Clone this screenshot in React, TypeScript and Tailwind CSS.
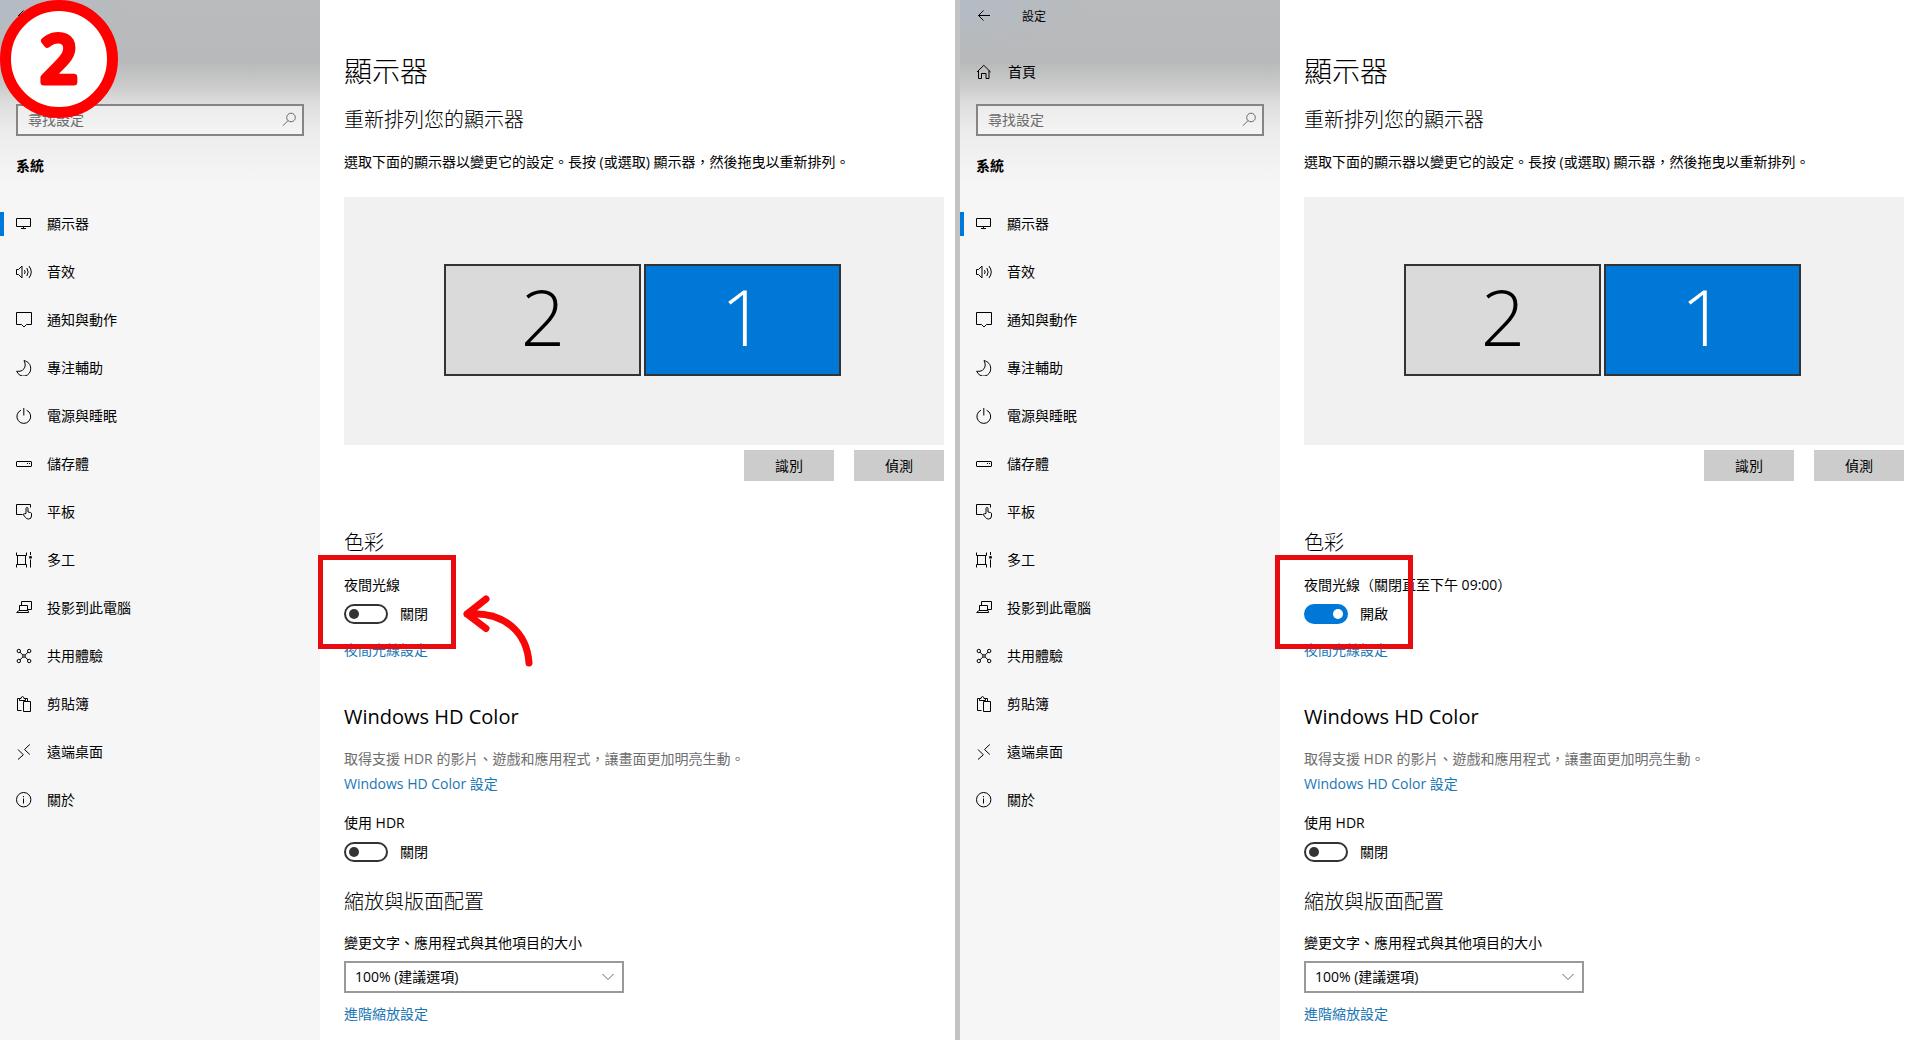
import { useState } from 'react';
import type { ReactNode } from 'react';

type NavItem = {
  label: string;
  icon: ReactNode;
};

const navItems: NavItem[] = [
  {
    label: '顯示器',
    icon: <path d="M.5 2.5h14v8h-14zM7.5 10.5v2M5 12.5h5" />,
  },
  {
    label: '音效',
    icon: (
      <path d="M.5 5.500v5h2l3.500 3.500v-12L2.500 5.500zM8.500 6q1.300 2 0 4M10.800 4q2.700 4 0 8M13 2q4.500 6 0 12" />
    ),
  },
  {
    label: '通知與動作',
    icon: <path d="M.5.5h15v12h-5L8 15l-2.500-2.500h-5z" />,
  },
  {
    label: '專注輔助',
    icon: <path d="M8 .6C12.200 1.500 14.700 4.600 14.700 8.300a7.200 7.200 0 0 1-14 2.900C6.800 12.500 11.500 7 8 .6z" />,
  },
  {
    label: '電源與睡眠',
    icon: <path d="M5 2.200a6.900 6.900 0 1 0 5.600 0M7.800 0v7.500" />,
  },
  {
    label: '儲存體',
    icon: (
      <>
        <rect x=".5" y="5.500" width="15" height="5" rx=".5" />
        <path d="M11 7.500h1M13 7.500h1" />
      </>
    ),
  },
  {
    label: '平板',
    icon: (
      <path d="M14.500 3.500v-3H.5v10h6M10 9.500V4.600q0-1.100 1-1.100t1 1.100v3.400l2.500.5q1 .3 1 1.300v2.200q0 3-3 3-2 0-3-1.500L7.300 10.800q0-1.500 1.500-1z" />
    ),
  },
  {
    label: '多工',
    icon: (
      <>
        <path d="M.5.5v3h10v-3M.5 15.500v-3h10v3M1.500 3.500v9M9.500 3.500v9M14.500 0v3M14.500 7.500v8" />
        <path d="M13.200 5.300h2.600" strokeWidth="2.400" />
      </>
    ),
  },
  {
    label: '投影到此電腦',
    icon: <path d="M5.500 5.500v-4h10v8h-4M3.500 11V5.500h8V11M3 10.500h9l.6 2H.6l2.400-2z" />,
  },
  {
    label: '共用體驗',
    icon: (
      <>
        <circle cx="2.800" cy="3" r="1.700" />
        <circle cx="13.200" cy="3" r="1.700" />
        <circle cx="2.800" cy="13" r="1.700" />
        <circle cx="13.200" cy="13" r="1.700" />
        <circle cx="8" cy="8" r="1.300" />
        <path d="M4 4.200l3 2.900M12 4.200L9 7.100M4 11.800l3-2.900M12 11.800L9 8.900" />
      </>
    ),
  },
  {
    label: '剪貼簿',
    icon: <path d="M5.500 14.500h-4v-12h2M9.500 2.500h2v3M3.500 4.500v-2H5q.2-2 1.500-2t1.500 2h1.500v2zM7.500 5.500h7v10h-7z" />,
  },
  {
    label: '遠端桌面',
    icon: <path d="M2 5.500l5.300 5.300L2 15.500M13.800.5L8.500 5.500l5.300 5" />,
  },
  {
    label: '關於',
    icon: (
      <>
        <circle cx="7.700" cy="7.700" r="7.200" />
        <path d="M7.500 6.500v5M7.500 4v1.200" />
      </>
    ),
  },
];

function Icon({ children, className = '' }: { children: ReactNode; className?: string }) {
  return (
    <svg
      viewBox="0 0 16 16"
      aria-hidden="true"
      className={`size-4 shrink-0 fill-none stroke-current ${className}`}
    >
      {children}
    </svg>
  );
}

function Sidebar({ titled }: { titled: boolean }) {
  return (
    <aside className="w-1/3 shrink-0 bg-[#f6f6f6] bg-[linear-gradient(to_bottom,#b9bbbd_0px,#b8b9ba_62px,#cbcbcb_86px,#dedede_104px,#ededed_134px,#f6f6f6_185px)]">
      <div className="bg-[radial-gradient(ellipse_at_top_left,#aebccb90,transparent_130px)]">
        <header className="flex h-[34px] items-center gap-[30px] px-4 text-xs">
          <button type="button" aria-label="返回">
            <Icon>
              <path d="M14 6.500H2.500M7.500 1.500l-5 5 5 5" />
            </Icon>
          </button>
          {titled ? <span>設定</span> : null}
        </header>
        <div className="mt-[14px] h-12 px-4 text-sm">
          {titled ? (
            <a href="#home" className="flex h-full items-center gap-4">
              <Icon>
                <path d="M1 8l6.800-6.700L14.600 8M2.500 6.500v8h3v-5h4.500v5h3v-8" />
              </Icon>
              首頁
            </a>
          ) : null}
        </div>
        <div className="px-4 pt-2">
          <label className="flex h-8 items-center border-2 border-[#858585] bg-white/40 pr-1 pl-[10px] text-[#6a6a6a]">
            <input
              type="text"
              aria-label="尋找設定"
              placeholder="尋找設定"
              className="min-w-0 flex-1 bg-transparent text-sm leading-5 outline-none placeholder:text-[#6a6a6a]"
            />
            <Icon>
              <circle cx="9" cy="5.500" r="4.300" />
              <path d="M6 8.700L.8 13.800" />
            </Icon>
          </label>
        </div>
      </div>
      <h2 className="mt-2 flex h-11 items-center px-4 text-sm font-bold">系統</h2>
      <nav className="mt-3">
        {navItems.map((item, index) => (
          <a key={item.label} href="#system" className="relative flex h-12 items-center gap-[15px] px-4 text-sm">
            {index === 0 ? <span className="absolute inset-y-3 left-0 w-1 bg-[#0078d7]" /> : null}
            <Icon>{item.icon}</Icon>
            {item.label}
          </a>
        ))}
      </nav>
    </aside>
  );
}

function Toggle({ label, initial = false }: { label: string; initial?: boolean }) {
  const [on, setOn] = useState(initial);

  return (
    <label className="mt-[9px] flex h-5 w-fit items-center gap-3 text-sm">
      <input
        type="checkbox"
        role="switch"
        aria-label={label}
        checked={on}
        onChange={(event) => setOn(event.target.checked)}
        className="flex h-5 w-11 appearance-none items-center rounded-full border-2 border-[#333] px-[3px] before:size-[10px] before:rounded-full before:bg-[#333] checked:justify-end checked:border-[#0078d7] checked:bg-[#0078d7] checked:before:bg-white"
      />
      {on ? '開啟' : '關閉'}
    </label>
  );
}

function Pane({
  id,
  nightLabel,
  nightOn = false,
  titled = false,
  className = '',
  children,
}: {
  id: string;
  nightLabel: string;
  nightOn?: boolean;
  titled?: boolean;
  className?: string;
  children: ReactNode;
}) {
  return (
    <section className="flex min-h-screen min-w-0">
      <Sidebar titled={titled} />
      <main className={`min-w-0 flex-1 pt-[53px] pl-6 pb-3 ${className}`}>
        <h1 className="text-[28px] leading-9 font-light">顯示器</h1>
        <h2 className="mt-[17px] text-xl leading-7 font-light">重新排列您的顯示器</h2>
        <p className="mt-[18px] text-sm leading-5">
          選取下面的顯示器以變更它的設定。長按 (或選取) 顯示器，然後拖曳以重新排列。
        </p>

        <div className="mt-[25px] flex h-[248px] items-center justify-center gap-[3px] bg-[#f1f1f1] pr-[2px] pb-[3px]">
          <button
            type="button"
            className="h-28 w-[197px] border-2 border-[#333] bg-[#dadada] pb-2 text-[78px] leading-none font-light"
          >
            2
          </button>
          <button
            type="button"
            className="h-28 w-[197px] border-2 border-[#333] bg-[#0078d7] pb-2 text-[78px] leading-none font-light text-white"
          >
            1
          </button>
        </div>
        <div className="mt-[5px] flex justify-end gap-5 text-sm">
          <button type="button" className="h-[31px] w-[90px] bg-[#ccc]">
            識別
          </button>
          <button type="button" className="h-[31px] w-[90px] bg-[#ccc]">
            偵測
          </button>
        </div>

        <h2 className="mt-12 text-xl leading-7 font-light">色彩</h2>
        <div className="relative mt-[18px] text-sm leading-5">
          <p>{nightLabel}</p>
          <Toggle label="夜間光線" initial={nightOn} />
          <a href="#night" className="mt-4 block w-fit text-[#1976b5]">
            夜間光線設定
          </a>
          {children}
        </div>

        <h2 className="mt-[43px] text-xl leading-7">Windows HD Color</h2>
        <div className="mt-[18px] text-sm leading-5">
          <p className="text-[#6e6e6e]">取得支援 HDR 的影片、遊戲和應用程式，讓畫面更加明亮生動。</p>
          <a href="#hd-color" className="mt-[5px] block w-fit text-[#1976b5]">
            Windows HD Color 設定
          </a>
          <p className="mt-[19px]">使用 HDR</p>
          <Toggle label="使用 HDR" />
        </div>

        <h2 className="mt-[26px] text-xl leading-7 font-light">縮放與版面配置</h2>
        <div className="mt-[17px] text-sm leading-5">
          <label htmlFor={`${id}-scale`} className="block">
            變更文字、應用程式與其他項目的大小
          </label>
          <div className="relative mt-2 w-[280px] max-w-full">
            <select
              id={`${id}-scale`}
              className="h-8 w-full appearance-none border-2 border-[#999] bg-white px-[9px]"
            >
              <option>100% (建議選項)</option>
            </select>
            <Icon className="pointer-events-none absolute top-2 right-2 text-[#666]">
              <path d="M2.500 5l5.500 5.500L13.500 5" />
            </Icon>
          </div>
          <a href="#scaling" className="mt-[11px] block w-fit text-[#1976b5]">
            進階縮放設定
          </a>
        </div>
      </main>
    </section>
  );
}

export default function App() {
  return (
    <div className="relative grid min-h-screen grid-cols-2 bg-white font-['Open_Sans','Noto_Sans_CJK_TC',sans-serif] text-black">
      <Pane id="before" nightLabel="夜間光線" className="border-r-[5px] border-[#c3c3c3] pr-[11px]">
        <span className="pointer-events-none absolute -top-5 -left-[26px] h-[94px] w-[138px] border-[5px] border-[#e80c10]" />
        <svg
          viewBox="0 0 72 72"
          aria-hidden="true"
          className="pointer-events-none absolute top-5 left-[118px] size-[72px] fill-none stroke-[#f90606] stroke-[7]"
          strokeLinecap="round"
          strokeLinejoin="round"
        >
          <path d="M24 4L5 19l19 14.500M5 19c38-3 60 19 62 49" />
        </svg>
      </Pane>
      <Pane id="after" nightLabel="夜間光線（關閉直至下午 09:00）" nightOn titled className="pr-4">
        <span className="pointer-events-none absolute -top-5 -left-[29px] h-[94px] w-[138px] border-[5px] border-[#e80c10]" />
      </Pane>

      <div className="absolute top-0 left-0 size-[118px] rounded-full border-[11px] border-[#f00] bg-white">
        <svg viewBox="0 0 96 96" className="size-full">
          <text
            x="48"
            y="71"
            textAnchor="middle"
            strokeLinejoin="round"
            className="fill-[#f00] stroke-[#f00] stroke-[7] font-['Open_Sans',sans-serif] text-[64px] font-normal"
          >
            2
          </text>
        </svg>
      </div>
    </div>
  );
}
